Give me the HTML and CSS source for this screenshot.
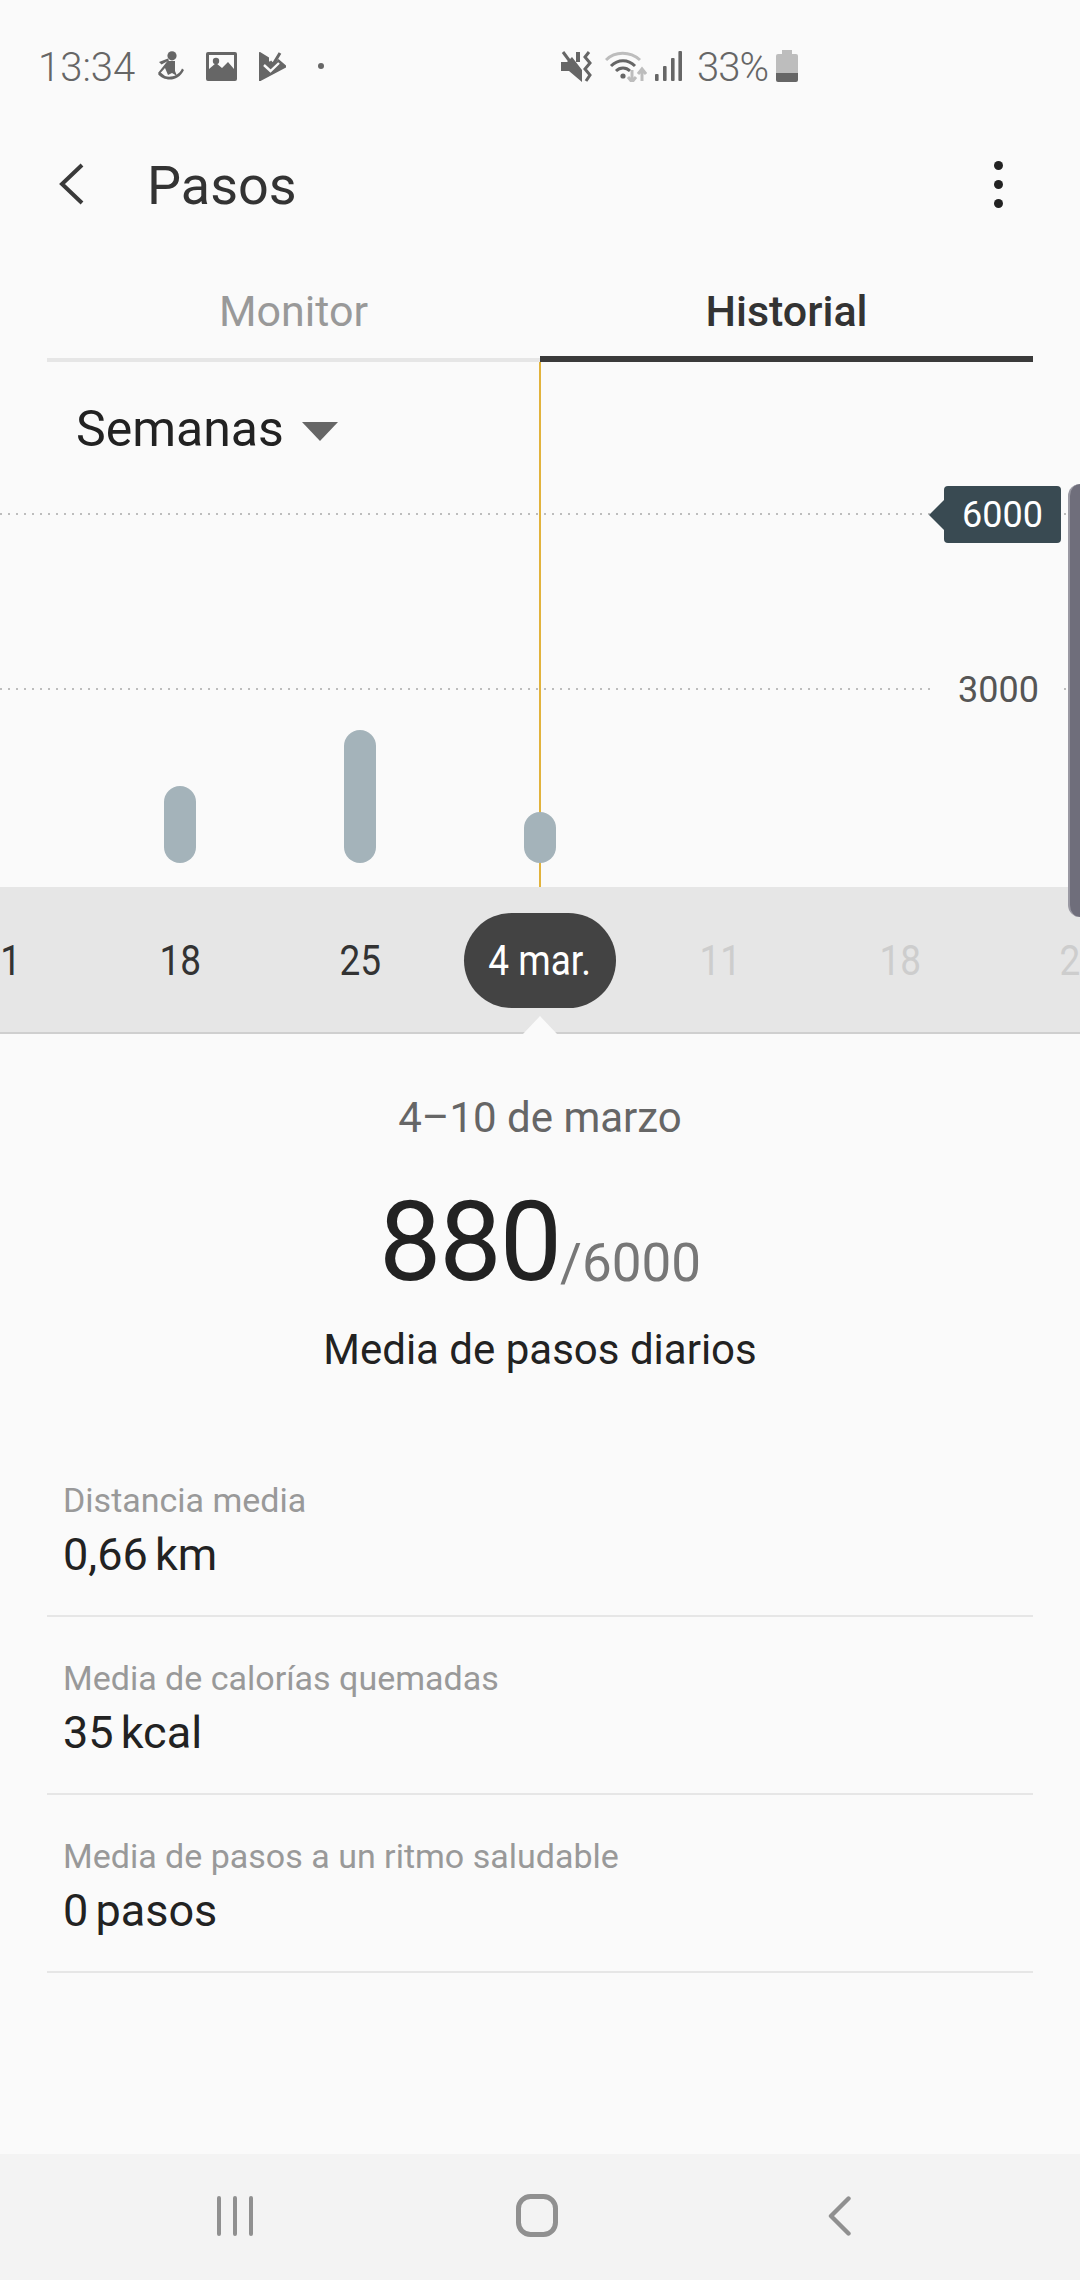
FILE: index.html
```html
<!DOCTYPE html>
<html lang="es">
<head>
<meta charset="utf-8">
<title>Pasos</title>
<link rel="stylesheet" href="styles.css">
</head>
<body>
<div class="screen">
  <div class="status">
    <div class="status-left">
      <span class="clock">13:34</span>
      <svg class="ic-health" viewBox="0 0 26 30"><circle cx="14" cy="4.8" r="4.6"/><path d="M1 11 L10 7.5 L11 9.5 L3.5 13.5Z"/><path d="M9.5 10 H17 V20 L19 25 L14 22 L10 24 L7 17 L1.5 23 L0 22 Z"/><path d="M0 23 C5 30 20 32 26 19 L24 17.5 C21 25 12 27 7 25 L2 21Z"/></svg>
      <svg class="ic-pic" viewBox="0 0 31 29"><path fill-rule="evenodd" d="M2 0H29a2 2 0 0 1 2 2V27a2 2 0 0 1-2 2H2a2 2 0 0 1-2-2V2a2 2 0 0 1 2-2ZM3 3V17L10 11 16 16 22 10 28 17V3Z"/><circle cx="10" cy="9" r="3.2"/></svg>
      <svg class="ic-check" viewBox="0 0 27 29"><path d="M0 1 a1 1 0 0 1 1.500-.8 L10 5.500 V9 L14 13 L19.500 7 L27 13.500 V15.500 L2 28.800 a1 1 0 0 1 -2 -.8Z"/><path d="M11 9.500 L14 12.500 L21 1" fill="none" stroke="#666" stroke-width="3"/><path d="M5 13 L11.500 19 L20 11" fill="none" stroke="#fafafa" stroke-width="2.400"/></svg>
      <span class="dot"></span>
    </div>
    <div class="status-right">
      <svg class="ic-mute" viewBox="0 0 31 31"><path d="M0 11 H6 L11 6 L21 19 V31 L8 20 H0Z"/><path d="M2 1 L19 24" stroke="#666" stroke-width="3"/><path d="M17 1 V11" stroke="#666" stroke-width="4"/><path d="M28 1 L24 6 L29 12 L24 18 L29 24 L25 30" fill="none" stroke="#666" stroke-width="3"/></svg>
      <svg class="ic-wifi" viewBox="0 0 42 31"><path d="M1 9 C10 0 25 0 35 9" fill="none" stroke="#bdbdbd" stroke-width="3"/><path d="M6 15 C13 8 23 8 30 15" fill="none" stroke="#666" stroke-width="3"/><path d="M11 20 C15 16 21 16 25 20" fill="none" stroke="#666" stroke-width="3"/><circle cx="18" cy="25" r="2.600" fill="#666"/><path d="M27 19 V30 M23 26 L27 31 L31 26" fill="none" stroke="#bdbdbd" stroke-width="3"/><path d="M37 30 V19 M33 23 L37 18 L41 23" fill="none" stroke="#bdbdbd" stroke-width="3"/></svg>
      <svg class="ic-signal" viewBox="0 0 27 30"><rect x="0" y="23" width="3.600" height="7" rx="1"/><rect x="8" y="15" width="3.600" height="15" rx="1"/><rect x="16" y="7" width="3.600" height="23" rx="1"/><rect x="23.400" y="0" width="3.600" height="30" rx="1"/></svg>
      <span class="batt-pct">33%</span>
      <svg class="ic-batt" viewBox="0 0 22 32"><path fill="#bdbdbd" d="M6 0H16V4H20a2 2 0 0 1 2 2V23H0V6a2 2 0 0 1 2-2H6Z"/><path fill="#666" d="M0 23H22V30a2 2 0 0 1-2 2H2a2 2 0 0 1-2-2Z"/></svg>
    </div>
  </div>

  <header class="appbar">
    <svg class="ic-back" viewBox="0 0 26 42"><path d="M24 2 L4 21 L24 40" fill="none" stroke="#3a3a3a" stroke-width="4"/></svg>
    <h1 class="title">Pasos</h1>
    <div class="more"><i></i><i></i><i></i></div>
  </header>

  <nav class="tabs">
    <div class="tab">Monitor</div>
    <div class="tab tab-on">Historial</div>
  </nav>

  <section class="chart">
    <div class="gridline g6"></div>
    <div class="gridline g3"></div>
    <div class="cursor"></div>
    <div class="target">6000</div>
    <div class="label3">3000</div>
    <div class="edge"></div>
    <div class="period"><span>Semanas</span><i class="caret"></i></div>
    <div class="bars">
      <div class="col"></div>
      <div class="col"><div class="bar b18"></div></div>
      <div class="col"><div class="bar b25"></div></div>
      <div class="col"><div class="bar b4"></div></div>
      <div class="col"></div>
      <div class="col"></div>
      <div class="col"></div>
    </div>
  </section>

  <div class="dates">
    <div class="date"><span>11</span></div>
    <div class="date"><span>18</span></div>
    <div class="date"><span>25</span></div>
    <div class="date date-on"><b><span>4 mar.</span></b></div>
    <div class="date date-off"><span>11</span></div>
    <div class="date date-off"><span>18</span></div>
    <div class="date date-off"><span>25</span></div>
    <i class="notch"></i>
  </div>

  <section class="summary">
    <p class="range">4–10 de marzo</p>
    <p class="big"><span class="num">880</span><span class="goal">/6000</span></p>
    <p class="cap">Media de pasos diarios</p>
  </section>

  <section class="stats">
    <div class="stat"><p class="k">Distancia media</p><p class="v">0,66 km</p></div>
    <div class="stat"><p class="k">Media de calorías quemadas</p><p class="v">35 kcal</p></div>
    <div class="stat"><p class="k">Media de pasos a un ritmo saludable</p><p class="v">0 pasos</p></div>
  </section>

  <footer class="nav">
    <svg class="n-recent" viewBox="0 0 36 40"><path d="M2 2V38M18 2V38M34 2V38" stroke="#909090" stroke-width="4" stroke-linecap="round"/></svg>
    <svg class="n-home" viewBox="0 0 42 43"><rect x="2.500" y="2.500" width="37" height="38" rx="12" fill="none" stroke="#909090" stroke-width="5"/></svg>
    <svg class="n-back" viewBox="0 0 23 40"><path d="M20.500 2.500 L3 20 L20.500 37.500" fill="none" stroke="#909090" stroke-width="4.400" stroke-linecap="round" stroke-linejoin="round"/></svg>
  </footer>
</div>
</body>
</html>
```

FILE: styles.css
```css
* { box-sizing: border-box; }
html, body { margin: 0; padding: 0; }
body { background: #fafafa; font-family: Roboto, "Noto Sans", sans-serif; }
p, h1 { margin: 0; font-weight: 400; }
.screen { width: 1080px; height: 2280px; display: flex; flex-direction: column; overflow: hidden; background: #fafafa; position: relative; }

/* status bar */
.status { height: 134px; padding: 50px 0 0 38px; display: flex; align-items: flex-start; color: #666; }
.status svg { display: block; fill: #666; flex: none; }
.status-left { display: flex; align-items: center; height: 32px; width: 523px; }
.status-right { display: flex; align-items: center; height: 32px; }
.clock { font-weight: 300; font-size: 40px; line-height: 36px; width: 120px; padding-top: 3px; }
.ic-health { width: 26px; height: 30px; }
.ic-pic { width: 31px; height: 29px; margin-left: 22px; }
.ic-check { width: 27px; height: 29px; margin-left: 22px; }
.dot { width: 6px; height: 6px; border-radius: 50%; background: #666; margin-left: 32px; }
.ic-mute { width: 31px; height: 31px; }
.ic-wifi { width: 42px; height: 31px; margin-left: 13px; }
.ic-signal { width: 27px; height: 30px; margin-left: 8px; }
.batt-pct { font-weight: 300; font-size: 40px; line-height: 36px; margin-left: 15px; letter-spacing: -1px; width: 79px; padding-top: 3px; }
.ic-batt { width: 22px; height: 32px; }

/* app bar */
.appbar { height: 100px; display: flex; align-items: center; padding: 0 77px 0 58px; }
.ic-back { width: 26px; height: 42px; flex: none; }
.title { font-size: 54px; color: #333; margin-left: 63px; flex: 1; padding-top: 2px; }
.more { display: flex; flex-direction: column; gap: 10px; }
.more i { display: block; width: 9px; height: 9px; border-radius: 50%; background: #222; }

/* tabs */
.tabs { margin: 0 47px; height: 128px; display: flex; }
.tab { flex: 1; border-bottom: 4px solid #e6e6e6; text-align: center; font-size: 43px; padding-top: 52px; line-height: 50px; color: #999; }
.tab-on { border-bottom: 6px solid #3a3a3a; color: #333; font-weight: 500; }

/* chart */
.chart { position: relative; height: 525px; padding: 0 0 24px; display: flex; flex-direction: column; justify-content: space-between; }
.period { display: flex; align-items: center; padding: 39px 0 0 76px; font-size: 50px; line-height: 56px; color: #222; }
.caret { width: 0; height: 0; margin-left: 18px; margin-top: 4px; border-left: 18px solid transparent; border-right: 18px solid transparent; border-top: 19px solid #666; }
.gridline { position: absolute; left: 0; right: 0; height: 2px; background: repeating-linear-gradient(90deg, #bdbdbd 0 2px, transparent 2px 8px); }
.g6 { top: 151px; }
.g3 { top: 326px; }
.cursor { position: absolute; left: 539px; top: 0; bottom: 0; width: 2px; background: #e2b33c; }
.target { position: absolute; left: 944px; top: 124px; width: 117px; height: 57px; background: #394a52; color: #fff; border-radius: 4px; font-size: 36px; line-height: 58px; text-align: center; }
.target::before { content: ""; position: absolute; left: -15px; top: 13.5px; border-top: 15px solid transparent; border-bottom: 15px solid transparent; border-right: 15px solid #394a52; }
.label3 { position: absolute; left: 936px; top: 306px; padding: 0 22px 0 22px; background: #fafafa; font-size: 36px; line-height: 44px; color: #555; }
.edge { position: absolute; left: 1068px; top: 122px; width: 12px; height: 433px; background: #6f6e7b; border-left: 2px solid #9a99a3; border-radius: 12px 0 0 12px; z-index: 3; }
.bars { display: flex; margin-left: -90px; align-items: flex-end; position: relative; }
.col { flex: 0 0 180px; display: flex; justify-content: center; }
.bar { width: 32px; border-radius: 16px; background: #a4b3ba; }
.b18 { height: 77px; }
.b25 { height: 133px; }
.b4 { height: 51px; }

/* date strip */
.dates { position: relative; height: 147px; background: #e6e6e6; border-bottom: 2px solid #cfcfcf; display: flex; }
.date { flex: 0 0 180px; display: flex; align-items: center; justify-content: center; height: 145px; font-size: 43px; color: #333; transform: translateX(-90px); padding-top: 2px; }
.date span { display: inline-block; transform: translateY(-1px) scaleX(.86); white-space: nowrap; }
.date-off { color: #cdcdcd; }
.date-on b { display: flex; align-items: center; justify-content: center; width: 152px; height: 95px; border-radius: 48px; background: #434343; color: #fff; font-weight: 400; }
.notch { position: absolute; left: 523px; bottom: -2px; border-left: 17px solid transparent; border-right: 17px solid transparent; border-bottom: 18px solid #fafafa; }

/* summary */
.summary { text-align: center; }
.range { font-size: 42px; line-height: 46px; color: #666; margin-top: 61px; }
.big { height: 130px; margin-top: 36px; line-height: 130px; color: #222; }
.num { font-size: 111px; font-weight: 400; letter-spacing: -2px; }
.goal { font-size: 53px; color: #777; font-weight: 400; position: relative; top: 1px; }
.cap { font-size: 42px; line-height: 48px; color: #222; margin-top: 19px; }

/* stats */
.stats { margin: 65px 47px 0; }
.stat { height: 178px; padding: 41px 0 0 16px; border-bottom: 2px solid #e6e6e6; }
.k { font-size: 34px; line-height: 40px; color: #999; }
.v { font-size: 45px; line-height: 50px; color: #222; margin-top: 10px; word-spacing: -4px; }

/* nav */
.nav { position: absolute; left: 0; right: 0; bottom: 0; height: 126px; background: #f3f3f3; }
.nav svg { position: absolute; display: block; }
.n-recent { left: 217px; top: 42px; width: 36px; height: 40px; }
.n-home { left: 516px; top: 40px; width: 42px; height: 43px; }
.n-back { left: 828px; top: 42px; width: 23px; height: 40px; }
```
